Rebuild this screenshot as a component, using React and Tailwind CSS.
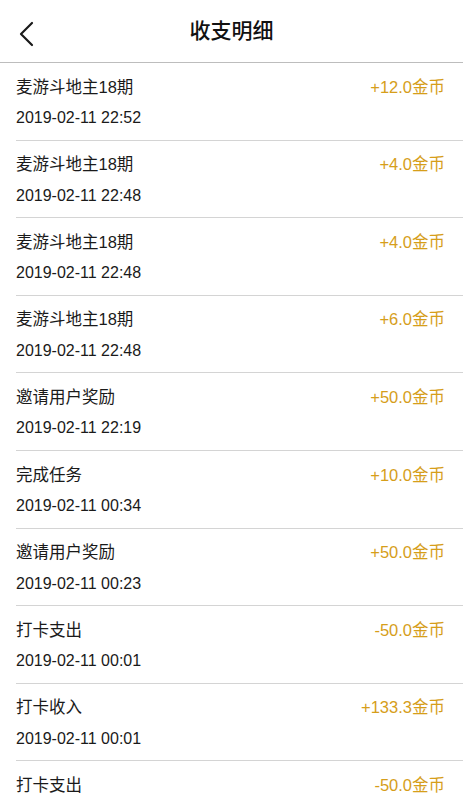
import React from 'react';

const records = [
  { title: '麦游斗地主18期', amount: '+12.0金币', time: '2019-02-11 22:52' },
  { title: '麦游斗地主18期', amount: '+4.0金币', time: '2019-02-11 22:48' },
  { title: '麦游斗地主18期', amount: '+4.0金币', time: '2019-02-11 22:48' },
  { title: '麦游斗地主18期', amount: '+6.0金币', time: '2019-02-11 22:48' },
  { title: '邀请用户奖励', amount: '+50.0金币', time: '2019-02-11 22:19' },
  { title: '完成任务', amount: '+10.0金币', time: '2019-02-11 00:34' },
  { title: '邀请用户奖励', amount: '+50.0金币', time: '2019-02-11 00:23' },
  { title: '打卡支出', amount: '-50.0金币', time: '2019-02-11 00:01' },
  { title: '打卡收入', amount: '+133.3金币', time: '2019-02-11 00:01' },
  { title: '打卡支出', amount: '-50.0金币', time: '2019-02-11 00:01' },
];

const Row = ({ title, amount, time }) => (
  <div className="ml-4 h-[77.6px] shrink-0 border-b border-[#d4d4d4] pr-[18px] flex flex-col">
    <div className="flex justify-between items-center mt-[13px] h-[22px]">
      <span className="text-[16.5px] text-[#1a1a1a]">{title}</span>
      <span className="text-[16.5px] text-[#d69e1a]">{amount}</span>
    </div>
    <div className="mt-[9px] text-[16px] text-[#1a1a1a] h-[22px] leading-[22px]">{time}</div>
  </div>
);

const App = () => {
  return (
    <div
      className="w-[463px] h-[800px] overflow-hidden bg-white flex flex-col"
      style={{ fontFamily: '"Liberation Sans", "Noto Sans CJK SC", sans-serif' }}
    >
      <div className="h-[63px] shrink-0 border-b border-[#bdbdbd] flex items-center relative">
        <svg className="absolute left-[17px] top-[21px]" width="18" height="26" viewBox="0 0 18 26">
          <path d="M15 2 L4 13 L15 24" fill="none" stroke="#1a1a1a" strokeWidth="2.2" strokeLinecap="round" strokeLinejoin="round" />
        </svg>
        <div className="flex-1 text-center text-[21px] font-medium text-[#111]">收支明细</div>
      </div>
      {records.map((r, i) => (
        <Row key={i} {...r} />
      ))}
    </div>
  );
};

export default App;
